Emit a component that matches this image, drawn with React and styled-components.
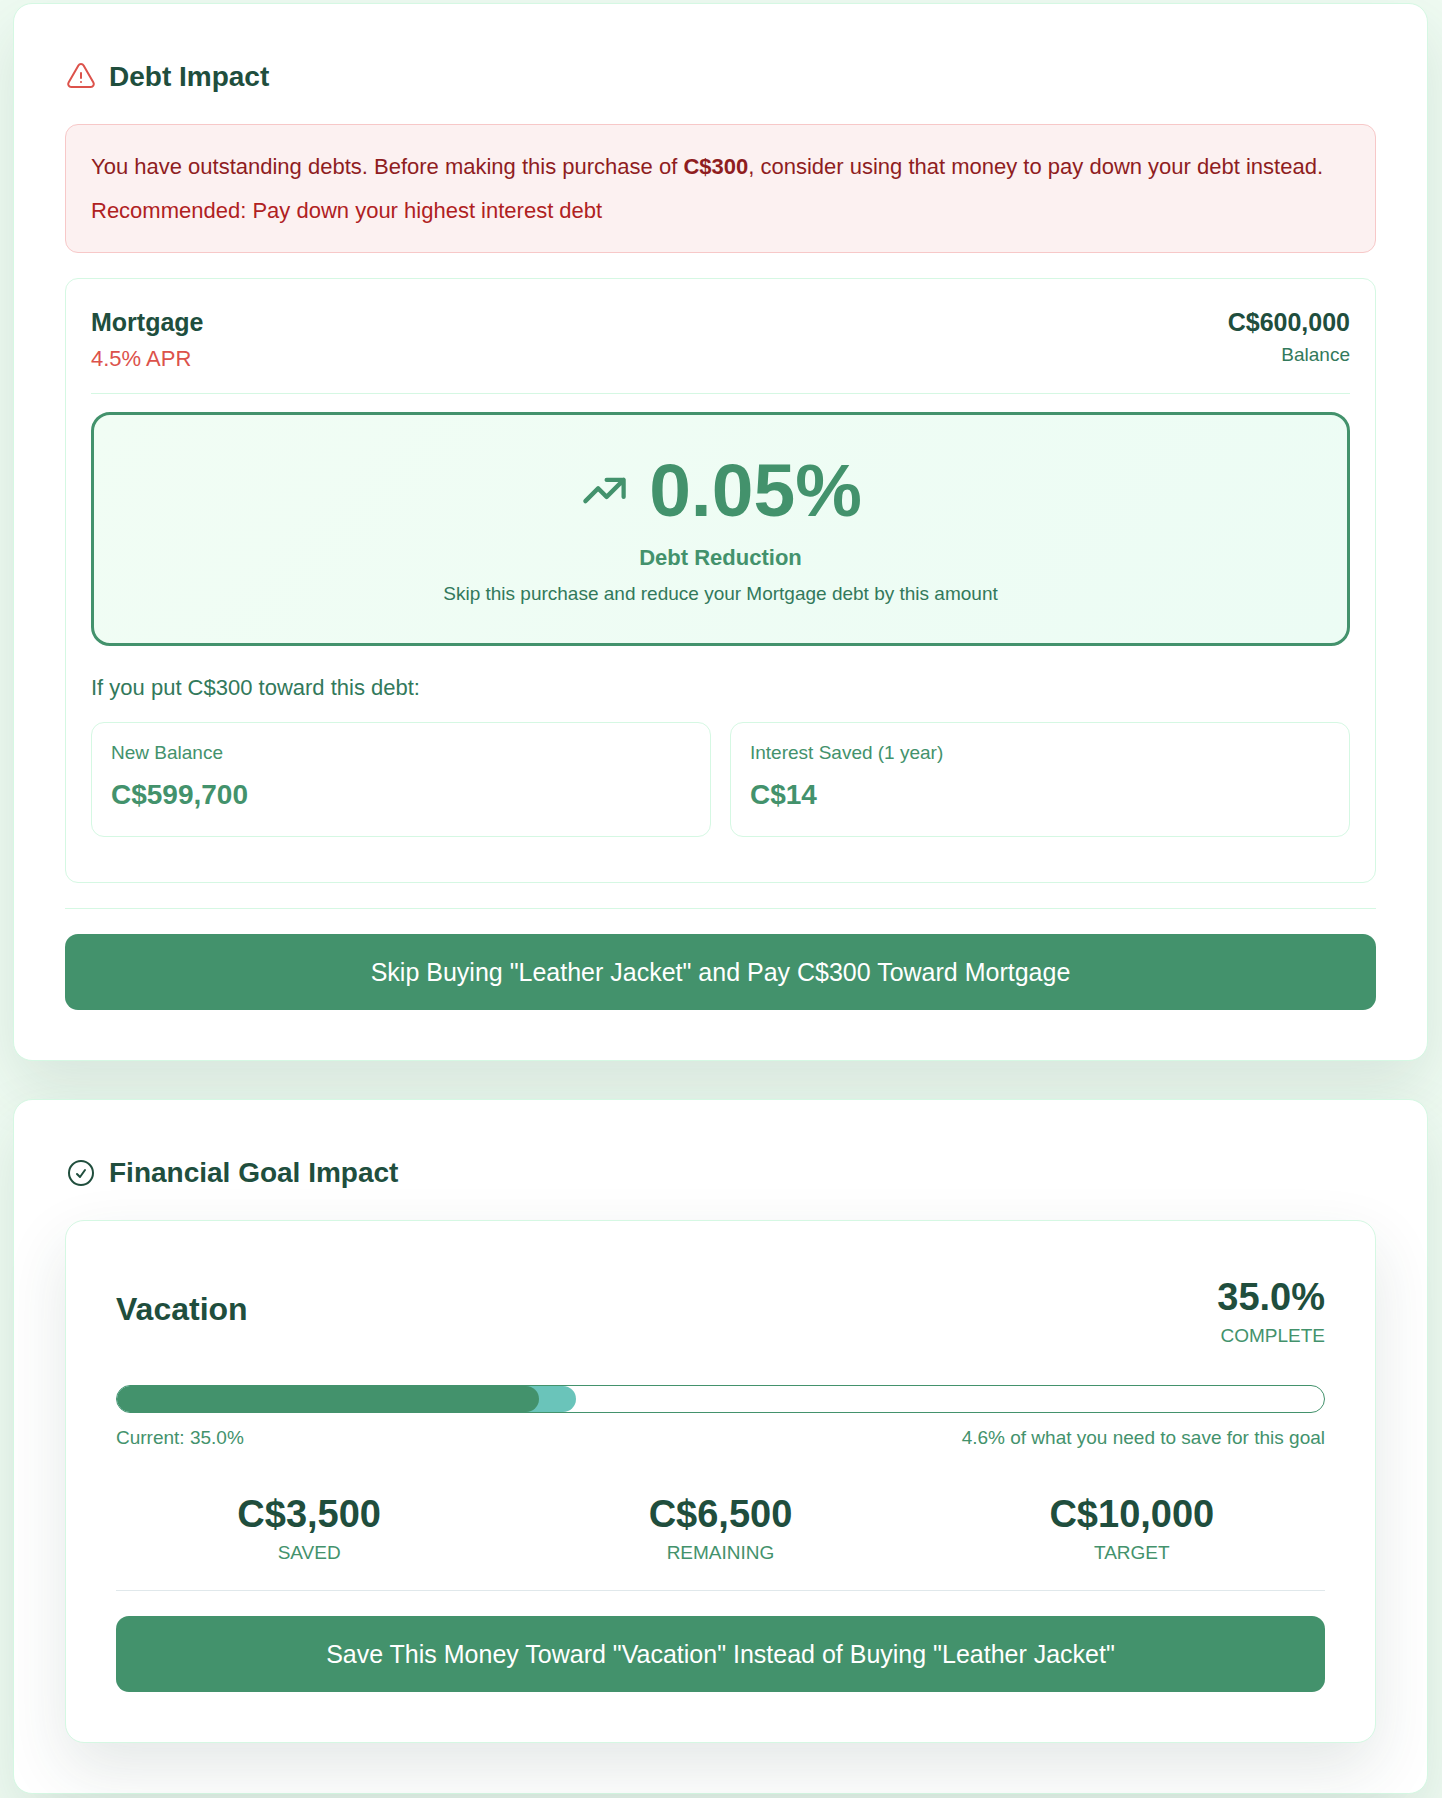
import React from 'react';
import styled, { createGlobalStyle } from 'styled-components';
import {
  HiOutlineExclamationTriangle,
  HiOutlineCheckCircle,
} from 'react-icons/hi2';
import { HiOutlineTrendingUp } from 'react-icons/hi';

const colors = {
  dark: '#204e3d',
  medium: '#32795b',
  main: '#43926c',
  border: '#d5f8e3',
  red: '#dc524b',
};

const goalStats = [
  { label: 'Saved', value: 'C$3,500' },
  { label: 'Remaining', value: 'C$6,500' },
  { label: 'Target', value: 'C$10,000' },
];

const debtStats = [
  { label: 'New Balance', value: 'C$599,700' },
  { label: 'Interest Saved (1 year)', value: 'C$14' },
];

const progress = { current: 35, potential: 38 };

const App = () => (
  <>
    <GlobalStyle />
    <Page>
      <Card>
        <SectionTitle>
          <HiOutlineExclamationTriangle size={32} color={colors.red} />
          Debt Impact
        </SectionTitle>

        <Alert>
          <p>
            You have outstanding debts. Before making this purchase of{' '}
            <strong>C$300</strong>, consider using that money to pay down your
            debt instead.
          </p>
          <Recommendation>
            Recommended: Pay down your highest interest debt
          </Recommendation>
        </Alert>

        <DebtPanel>
          <DebtHeader>
            <div>
              <DebtName>Mortgage</DebtName>
              <Apr>4.5% APR</Apr>
            </div>
            <DebtBalance>
              <DebtName as="div">C$600,000</DebtName>
              <SmallText>Balance</SmallText>
            </DebtBalance>
          </DebtHeader>

          <Reduction>
            <ReductionValue>
              <HiOutlineTrendingUp size={51} />
              0.05%
            </ReductionValue>
            <ReductionLabel>Debt Reduction</ReductionLabel>
            <SmallText>
              Skip this purchase and reduce your Mortgage debt by this amount
            </SmallText>
          </Reduction>

          <Scenario>If you put C$300 toward this debt:</Scenario>
          <StatGrid>
            {debtStats.map(({ label, value }) => (
              <StatBox key={label}>
                <StatLabel>{label}</StatLabel>
                <StatValue>{value}</StatValue>
              </StatBox>
            ))}
          </StatGrid>
        </DebtPanel>

        <Actions $line={colors.border}>
          <ActionButton type="button">
            Skip Buying "Leather Jacket" and Pay C$300 Toward Mortgage
          </ActionButton>
        </Actions>
      </Card>

      <Card>
        <SectionTitle>
          <HiOutlineCheckCircle size={32} />
          Financial Goal Impact
        </SectionTitle>

        <GoalCard>
          <GoalHeader>
            <GoalName>Vacation</GoalName>
            <GoalComplete>
              <BigNumber>35.0%</BigNumber>
              <Caption>Complete</Caption>
            </GoalComplete>
          </GoalHeader>

          <Track>
            <Fill $color="#6ac4ba" style={{ width: `${progress.potential}%` }} />
            <Fill
              $color={colors.main}
              style={{ width: `${progress.current}%` }}
            />
          </Track>
          <TrackLabels>
            <span>Current: 35.0%</span>
            <span>4.6% of what you need to save for this goal</span>
          </TrackLabels>

          <GoalStats>
            {goalStats.map(({ label, value }) => (
              <div key={label}>
                <BigNumber>{value}</BigNumber>
                <Caption>{label}</Caption>
              </div>
            ))}
          </GoalStats>

          <Actions $line="#e0e8eb">
            <ActionButton type="button">
              Save This Money Toward "Vacation" Instead of Buying "Leather
              Jacket"
            </ActionButton>
          </Actions>
        </GoalCard>
      </Card>
    </Page>
  </>
);

const GlobalStyle = createGlobalStyle`
  *, *::before, *::after {
    box-sizing: border-box;
  }
  body {
    margin: 0;
    background: #effbf2;
    color: ${colors.dark};
    font-family: 'Liberation Sans', Arial, sans-serif;
    font-size: 22px;
    line-height: 36px;
  }
  h2, h3, p {
    margin: 0;
  }
`;

const Page = styled.main`
  display: flex;
  flex-direction: column;
  gap: 38px;
  padding: 3px 14px 4px 13px;
`;

const Card = styled.section`
  padding: 51px 51px 50px;
  background: #fff;
  border: 1px solid ${colors.border};
  border-radius: 19px;
  box-shadow: 0 26px 64px rgba(32, 78, 61, 0.12);
`;

const SectionTitle = styled.h2`
  display: flex;
  align-items: center;
  gap: 12px;
  margin-bottom: 25px;
  font-size: 28px;
  line-height: 44px;
`;

const Alert = styled.div`
  padding: 25px 25px 24px;
  margin-bottom: 25px;
  background: #fcf1f1;
  border: 1px solid #f7c8c8;
  border-radius: 13px;
  color: #8f1d1f;
  line-height: 34px;
`;

const Recommendation = styled.p`
  margin-top: 10px;
  color: #b0211f;
`;

const DebtPanel = styled.div`
  padding: 25px 25px 45px;
  margin-bottom: 25px;
  border: 1px solid ${colors.border};
  border-radius: 13px;
`;

const DebtHeader = styled.div`
  display: flex;
  justify-content: space-between;
  padding-bottom: 16px;
  margin-bottom: 18px;
  border-bottom: 1px solid ${colors.border};
`;

const DebtBalance = styled.div`
  text-align: right;
`;

const DebtName = styled.h3`
  font-size: 25px;
  font-weight: 700;
  line-height: 37px;
`;

const Apr = styled.div`
  color: ${colors.red};
`;

const SmallText = styled.div`
  color: ${colors.medium};
  font-size: 19px;
  line-height: 28px;
`;

const Reduction = styled.div`
  padding: 35px;
  margin-bottom: 24px;
  background: linear-gradient(135deg, #f1fdf4, #ecfcf4);
  border: 3px solid ${colors.main};
  border-radius: 19px;
  text-align: center;
`;

const ReductionValue = styled.div`
  display: flex;
  align-items: center;
  justify-content: center;
  gap: 19px;
  margin-bottom: 10px;
  color: ${colors.main};
  font-size: 75px;
  font-weight: 700;
  line-height: 80px;
`;

const ReductionLabel = styled.div`
  margin-bottom: 4px;
  color: ${colors.main};
  font-weight: 700;
`;

const Scenario = styled.p`
  margin-bottom: 16px;
  color: ${colors.medium};
`;

const StatGrid = styled.div`
  display: grid;
  grid-template-columns: 1fr 1fr;
  gap: 19px;
`;

const StatBox = styled.div`
  padding: 16px 19px 19px;
  border: 1px solid ${colors.border};
  border-radius: 13px;
`;

const StatLabel = styled.div`
  margin-bottom: 6px;
  color: ${colors.main};
  font-size: 19px;
  line-height: 28px;
`;

const StatValue = styled.div`
  color: ${colors.main};
  font-size: 28px;
  font-weight: 700;
  line-height: 44px;
`;

const Actions = styled.div`
  padding-top: 25px;
  border-top: 1px solid ${({ $line }) => $line};
`;

const ActionButton = styled.button`
  display: block;
  width: 100%;
  padding: 19px;
  background: ${colors.main};
  border: 0;
  border-radius: 13px;
  color: #fff;
  cursor: pointer;
  font-family: inherit;
  font-size: 25px;
  line-height: 38px;
`;

const GoalCard = styled.div`
  padding: 50px;
  background: #fff;
  border: 1px solid ${colors.border};
  border-radius: 19px;
  box-shadow: 0 26px 64px rgba(32, 62, 56, 0.12);
`;

const GoalHeader = styled.div`
  display: flex;
  align-items: center;
  justify-content: space-between;
  margin-bottom: 38px;
`;

const GoalName = styled.h3`
  font-size: 32px;
  line-height: 44px;
`;

const GoalComplete = styled.div`
  text-align: right;
`;

const BigNumber = styled.div`
  font-size: 38px;
  font-weight: 700;
  line-height: 53px;
`;

const Caption = styled.div`
  color: ${colors.main};
  font-size: 19px;
  line-height: 23px;
  text-transform: uppercase;
`;

const Track = styled.div`
  display: grid;
  height: 28px;
  overflow: hidden;
  border: 1px solid ${colors.main};
  border-radius: 14px;
`;

// both fills share one grid cell, the current one is painted last
const Fill = styled.div`
  grid-area: 1 / 1;
  background: ${({ $color }) => $color};
  border-radius: 13px;
`;

const TrackLabels = styled.div`
  display: flex;
  justify-content: space-between;
  margin: 11px 0 36px;
  color: ${colors.main};
  font-size: 19px;
  line-height: 28px;
`;

const GoalStats = styled.div`
  display: grid;
  grid-template-columns: repeat(3, 1fr);
  gap: 25px;
  margin-bottom: 26px;
  text-align: center;
`;

export default App;
